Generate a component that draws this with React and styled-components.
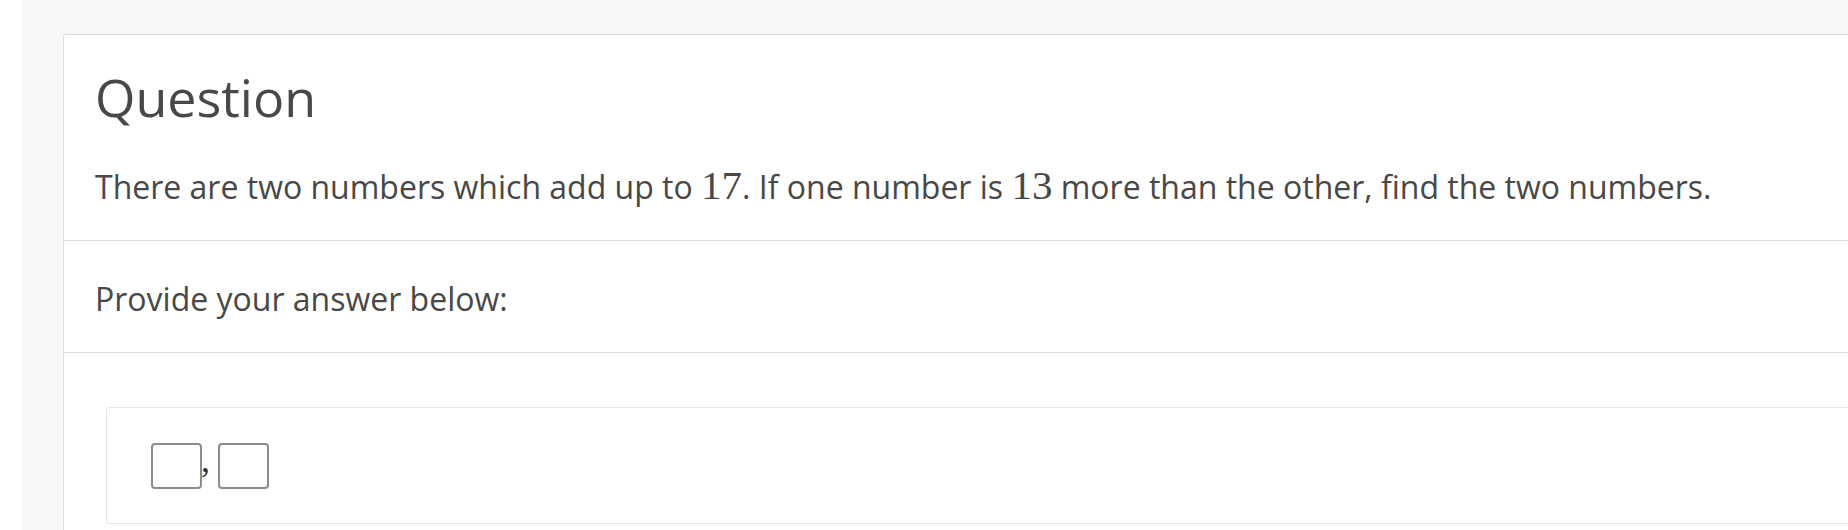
import styled, { createGlobalStyle } from "styled-components";

const GlobalStyle = createGlobalStyle`
  html, body {
    margin: 0;
    padding: 0;
    background: #ffffff;
    overflow: hidden;
  }
  body {
    font-family: "Open Sans", "Noto Sans", sans-serif;
    color: #484848;
  }
`;

export default function App() {
  return (
    <>
      <GlobalStyle />
      <Page>
        <Card>
          <Section>
            <Heading>Question</Heading>
            <Text>
              There are two numbers which add up to <Math>17</Math>. If one
              number is <Math>13</Math> more than the other, find the two
              numbers.
            </Text>
          </Section>
          <Section>
            <Text>Provide your answer below:</Text>
          </Section>
          <AnswerSection>
            <AnswerBox>
              <Inputs>
                <Blank />
                <Comma>,</Comma>
                <Blank />
              </Inputs>
            </AnswerBox>
          </AnswerSection>
        </Card>
      </Page>
    </>
  );
}

const Page = styled.div`
  margin-left: 22px;
  min-height: 530px;
  background: #f7f7f7;
  padding: 34px 0 0 41px;
  box-sizing: border-box;
`;

const Card = styled.div`
  width: 1900px;
  background: #ffffff;
  border: 1px solid #dddddd;
  border-radius: 3px;
`;

const Section = styled.div`
  padding: 36px 31px 31px;
  border-bottom: 1px solid #dddddd;

  &:first-child {
    padding-top: 34px;
  }
`;

const Heading = styled.h3`
  margin: 0 0 40px;
  font-size: 52px;
  line-height: 56px;
  font-weight: 400;
  color: #484848;
`;

const Text = styled.p`
  margin: 0;
  font-size: 32px;
  line-height: 44px;
  color: #484848;
`;

const Math = styled.span`
  font-family: "Liberation Serif", "DejaVu Serif", serif;
  font-size: 41px;
  line-height: 1;
`;

const AnswerSection = styled.div`
  padding: 54px 0 40px 42px;
`;

const AnswerBox = styled.div`
  border: 1px solid #e5e5e5;
  border-radius: 3px;
  padding: 34px 44px 34px;
`;

const Inputs = styled.div`
  display: flex;
  align-items: flex-end;
`;

const Blank = styled.div`
  width: 47px;
  height: 42px;
  border: 2px solid #8c8c8c;
  border-radius: 4px;
`;

const Comma = styled.span`
  font-family: "Liberation Serif", "DejaVu Serif", serif;
  font-size: 36px;
  line-height: 36px;
  color: #333333;
  margin: 0 8px 11px -1px;
`;
